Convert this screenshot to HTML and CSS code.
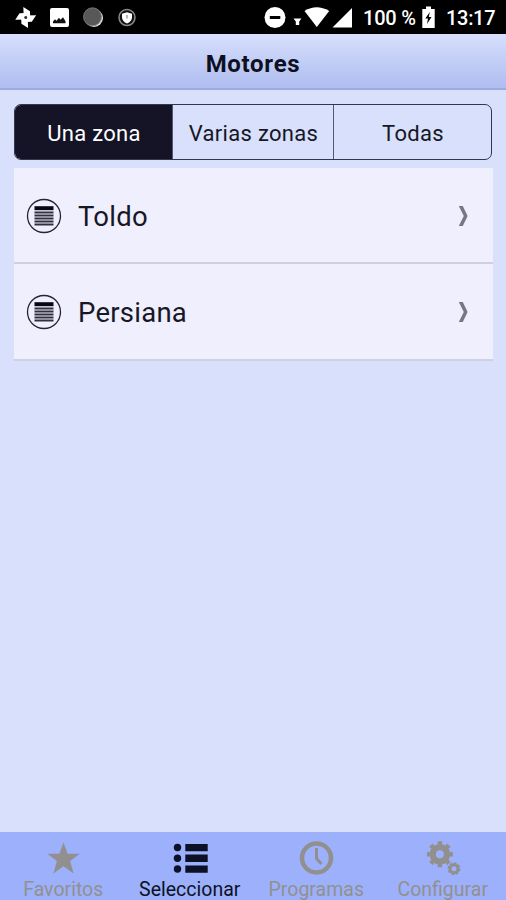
FILE: index.html
```html
<!DOCTYPE html>
<html lang="es">
<head>
<meta charset="utf-8">
<title>Motores</title>
<link rel="stylesheet" href="styles.css">
</head>
<body>
<div class="app">
  <div class="status">
    <svg class="status-left" width="130" height="34" viewBox="10 0 130 34">
      <g fill="#fff" transform="translate(25.7 17.500) rotate(-2)">
        <path d="M-2 2V-10.500L4.500-6V-1Z"/>
        <path d="M-2 2V-10.500L4.500-6V-1Z" transform="rotate(90)"/>
        <path d="M-2 2V-10.500L4.500-6V-1Z" transform="rotate(180)"/>
        <path d="M-2 2V-10.500L4.500-6V-1Z" transform="rotate(270)"/>
        <circle r="1.500" fill="#333"/>
      </g>
      <rect x="50" y="8" width="19" height="19" rx="2" fill="#fff"/>
      <path d="M53 23.300v-1.800l2-2.300 1.500 1.500 2.500-3 1.500 2 2.500-2.500 2.500 4v2.100z" fill="#111"/>
      <circle cx="94" cy="18" r="9" fill="#ddd"/>
      <circle cx="92.500" cy="16.800" r="9" fill="#585858" stroke="#858585" stroke-width=".8"/>
      <circle cx="127" cy="17.500" r="8" fill="#111" stroke="#8b8b8b" stroke-width="1.500"/>
      <path d="M127 12.200l5 1.500v3.500c0 3-2 5-5 6.300-3-1.300-5-3.300-5-6.300v-3.500z" fill="#fff"/>
      <path d="M126.300 15h1.400v3.500h-1.400z" fill="#999"/>
    </svg>
    <div class="status-right">
      <svg class="signals" width="92" height="34" viewBox="262 0 92 34">
        <circle cx="275" cy="17.500" r="10.500" fill="#fff"/>
        <path d="M269.800 16h10.500v3h-10.500z"/>
        <path d="M293.500 18.500h8l-2.300 3v3.500h-3.400v-3.500z" fill="#fff"/>
        <path d="M304.500 11Q316.500 3.500 329.200 11L316.800 27z" fill="#fff"/>
        <path d="M352 8v19.500h-19.500z" fill="#fff"/>
      </svg>
      <span class="percent">100 %</span>
      <svg class="battery" width="13" height="34" viewBox="422 0 13 34">
        <path d="M422.300 9h3.700V6.500h5V9h3.700v19h-12.400z" fill="#fff"/>
        <path d="M429.800 12l-4.500 6.500h2.700l-1 5.500 4.500-7h-2.700z"/>
      </svg>
      <span class="clock">13:17</span>
    </div>
  </div>
  <header class="header"><h1>Motores</h1></header>
  <main class="main">
    <div class="segments">
      <div class="segment selected"><span>Una zona</span></div>
      <div class="segment"><span>Varias zonas</span></div>
      <div class="segment"><span>Todas</span></div>
    </div>
    <div class="list">
      <div class="row">
        <svg class="blind" width="36" height="36" viewBox="0 0 36 36">
          <circle cx="18" cy="18" r="16.500" fill="none" stroke="#242436" stroke-width="1.300"/>
          <path d="M8.500 10.200h19" stroke="#080814" stroke-width="4"/>
          <path d="M8.500 14.500h19M8.500 17.500h19M8.500 20.500h19M8.500 23.500h19M8.500 26.500h19" stroke="#30303e" stroke-width="2.100"/>
        </svg>
        <span class="name">Toldo</span>
        <svg class="chevron" width="12" height="22" viewBox="0 0 12 22"><path d="M.8 1h4l4.800 10-4.800 10h-4l5-10z" fill="#777681"/></svg>
      </div>
      <div class="row">
        <svg class="blind" width="36" height="36" viewBox="0 0 36 36">
          <circle cx="18" cy="18" r="16.500" fill="none" stroke="#242436" stroke-width="1.300"/>
          <path d="M8.500 10.200h19" stroke="#080814" stroke-width="4"/>
          <path d="M8.500 14.500h19M8.500 17.500h19M8.500 20.500h19M8.500 23.500h19M8.500 26.500h19" stroke="#30303e" stroke-width="2.100"/>
        </svg>
        <span class="name">Persiana</span>
        <svg class="chevron" width="12" height="22" viewBox="0 0 12 22"><path d="M.8 1h4l4.800 10-4.800 10h-4l5-10z" fill="#777681"/></svg>
      </div>
    </div>
  </main>
  <nav class="tabs">
    <div class="tab">
      <svg width="40" height="40" viewBox="0 0 40 40"><path d="M20.500 6.500l4.200 11.200h12.100l-9.700 7.400 3.500 12.400-10.100-7.300-10.100 7.300 3.500-12.400-9.700-7.400h12.100z" fill="currentColor"/></svg>
      <span>Favoritos</span>
    </div>
    <div class="tab active">
      <svg width="40" height="40" viewBox="0 0 40 40" fill="currentColor"><circle cx="7.500" cy="11.500" r="3.700"/><circle cx="7.500" cy="22.200" r="3.700"/><circle cx="7.500" cy="33" r="3.700"/><path d="M15.300 8h22.400v7.300H15.300zM15.300 18.600h22.400v7.300H15.300zM15.300 29.400h22.400v7.300H15.300z"/></svg>
      <span>Seleccionar</span>
    </div>
    <div class="tab">
      <svg width="40" height="40" viewBox="0 0 40 40" fill="none" stroke="currentColor"><circle cx="20.500" cy="22" r="14.500" stroke-width="4.500"/><path d="M20.500 12v10.500l5 5.500" stroke-width="3"/></svg>
      <span>Programas</span>
    </div>
    <div class="tab">
      <svg width="40" height="40" viewBox="0 0 40 40" fill="none" stroke="currentColor">
        <circle cx="16.900" cy="18.300" r="7.200" stroke-width="6.400"/>
        <circle cx="16.900" cy="18.300" r="11" stroke-width="4" pathLength="80" stroke-dasharray="5 5" stroke-dashoffset="2.500"/>
        <circle cx="31" cy="32.700" r="4" stroke-width="3"/>
        <circle cx="31" cy="32.700" r="5.700" stroke-width="1.500" pathLength="80" stroke-dasharray="6 4"/>
      </svg>
      <span>Configurar</span>
    </div>
  </nav>
</div>
</body>
</html>
```
FILE: styles.css
```css
* { box-sizing: border-box; }
body { margin: 0; font-family: Roboto, "Liberation Sans", sans-serif; color: #171725; }
.app { width: 506px; height: 900px; display: flex; flex-direction: column; overflow: hidden; background: #d8e0fc; }
svg { display: block; flex: none; }
.status { height: 34px; flex: none; display: flex; justify-content: space-between; padding: 0 11px 0 10px; background: #000; color: #fff; }
.status-right { display: flex; line-height: 36px; font-size: 20px; font-weight: 500; white-space: nowrap; }
.percent { width: 59px; margin-left: 9px; letter-spacing: -.2px; }
.clock { width: 49px; margin-left: 11px; letter-spacing: -.3px; }
.header { height: 56px; flex: none; display: flex; align-items: center; justify-content: center; background: linear-gradient(#d7dffc, #afbdf0); border-bottom: 2px solid #9cabd9; padding-top: 5px; }
.header h1 { margin: 0; font-size: 24px; line-height: 30px; font-weight: 700; letter-spacing: .7px; color: #0d1020; }
.main { flex: 1; padding: 14px 14px 0; }
.segments { height: 56px; display: grid; grid-template-columns: 157px 161px 1fr; border: 1px solid #35374a; border-radius: 7px; overflow: hidden; }
.segment { display: flex; align-items: center; justify-content: center; font-size: 22px; letter-spacing: .3px; border-left: 1px solid #55586d; padding: 3px 0 0 1px; }
.segment.selected { background: #141426; color: #fff; border-left: 0; }
.list { margin: 8px -1px 0 0; background: #efeffe; }
.row { height: 96px; display: flex; align-items: center; border-bottom: 2px solid #cfd0e2; padding: 2px 23px 0 12px; }
.row:last-child { height: 97px; padding-top: 1px; }
.name { flex: 1; margin-left: 16px; font-size: 27.500px; letter-spacing: .25px; }
.tabs { height: 68px; flex: none; display: grid; grid-template-columns: repeat(4, 1fr); background: #9cb0fb; color: #92908f; }
.tab { display: flex; flex-direction: column; align-items: center; padding-top: 4px; font-size: 19.500px; line-height: 22px; white-space: nowrap; }
.tab span { margin-top: 3px; }
.active { color: #0d1125; }
```
